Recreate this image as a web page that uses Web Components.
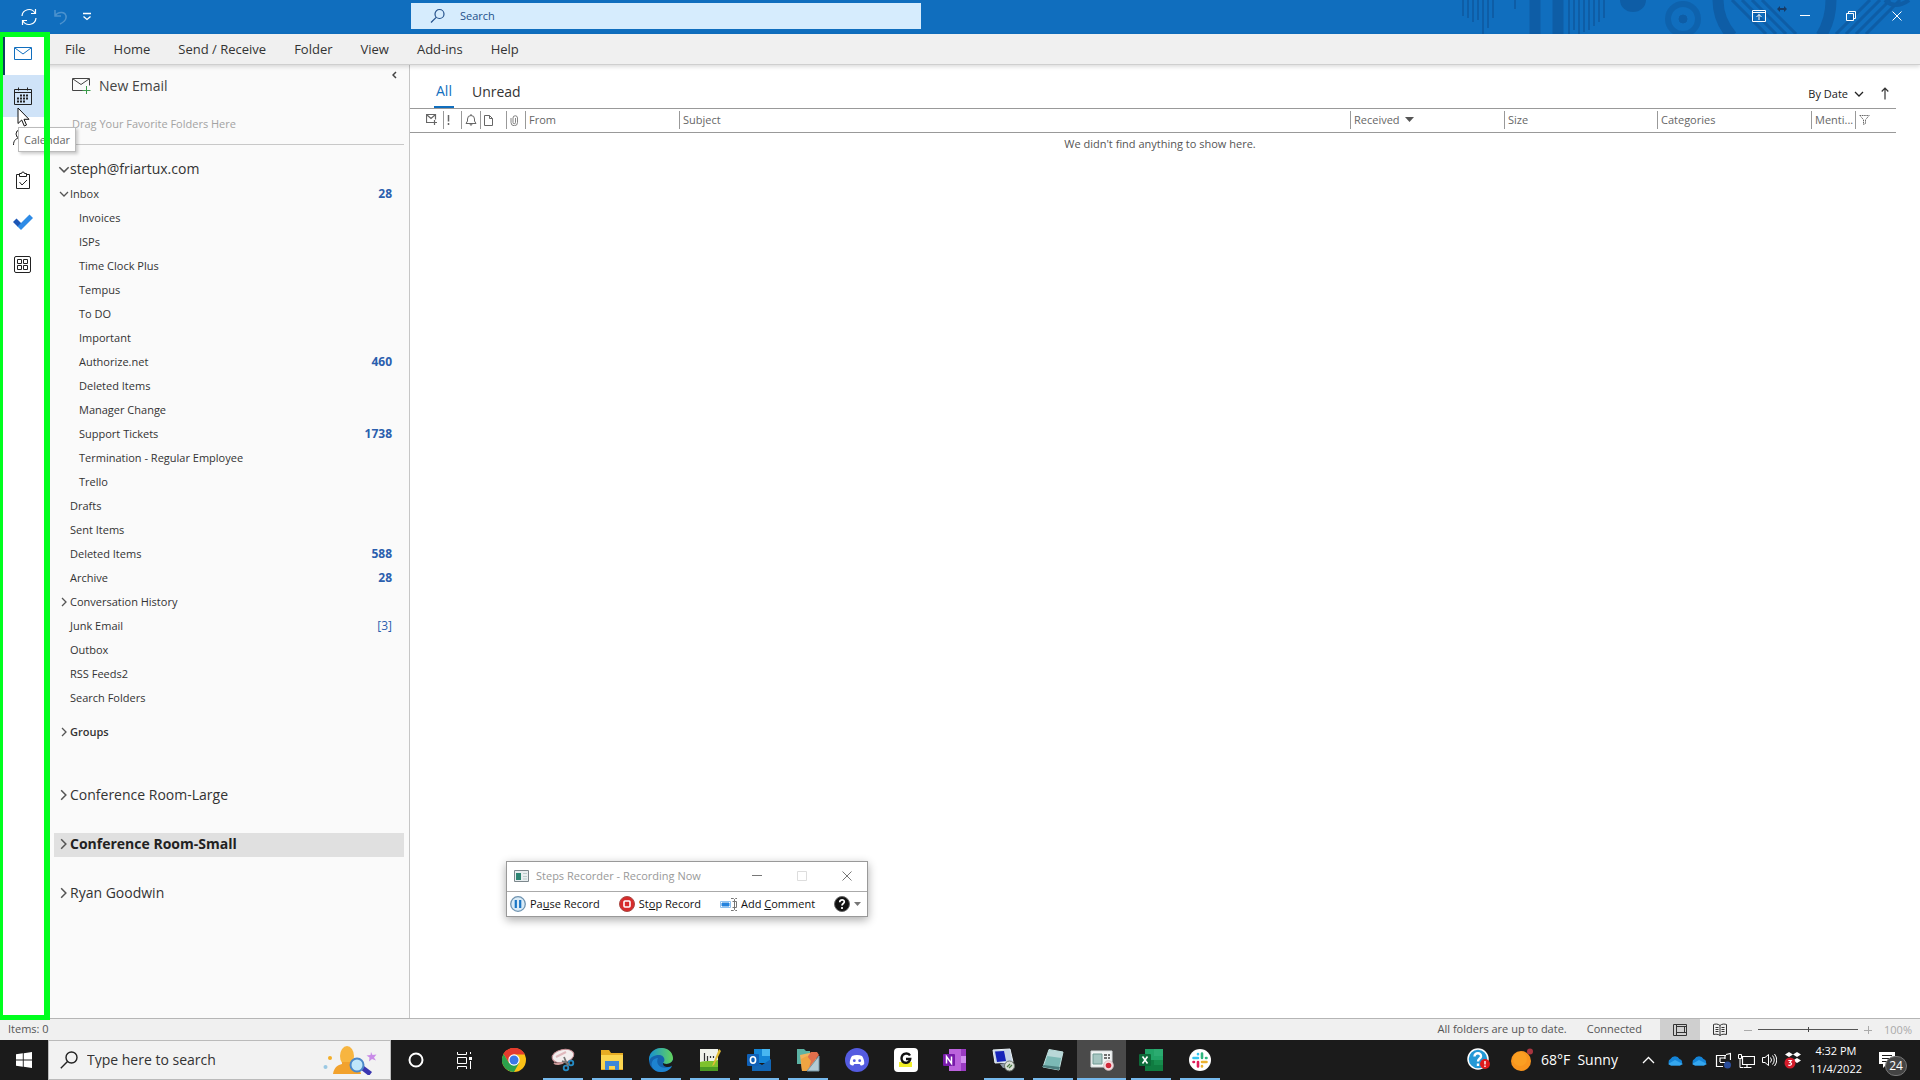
<!DOCTYPE html>
<html lang="en">
<head>
<meta charset="utf-8">
<title>Outlook</title>
<style>
html,body{height:100%;margin:0}
body{font:11px/16px "Open Sans","Noto Sans",sans-serif;color:#333;background:#fff;overflow:hidden}
</style>
</head>
<body>
<outlook-desktop></outlook-desktop>
<script>
const base = `*{box-sizing:border-box}button,input{font:inherit;color:inherit;background:none;border:0;padding:0;margin:0;outline:0}button{cursor:default;display:flex;align-items:center}svg{display:block;flex:none}`;
function define(name, css, html) {
  const t = document.createElement('template');
  customElements.define(name, class extends HTMLElement {
    constructor() {
      super();
      t.innerHTML = `<style>${base}${css}</style>${typeof html === 'function' ? html(this) : html}`;
      this.attachShadow({mode: 'open'}).append(t.content.cloneNode(true));
    }
  });
}
const svg = (w, h, body, extra = '') => `<svg width="${w}" height="${h}" viewBox="0 0 ${w} ${h}" fill="none" stroke="currentColor" aria-hidden="true" ${extra}>${body}</svg>`;
const I = {
  sync: svg(18,18,'<path d="M2 8a7 7 0 0 1 13-3M16 10a7 7 0 0 1-13 3M15.500 1v4.500H11M2.500 17v-4.500H7" stroke-width="1.200"/>'),
  undo: svg(18,18,'<path d="M3 2v6h6M3 8c3-5 12-5 11 2-.500 3-4 5-6 6" stroke-width="1.500"/>'),
  qat: svg(10,10,'<path d="M1 1.500h8M1.500 4.500 5 7.500l3.500-3" stroke-width="1.300"/>'),
  find: svg(16,16,'<circle cx="9.500" cy="6" r="4.500" stroke-width="1.200"/><path d="M6.200 9.300 1 14.500" stroke-width="1.200"/>'),
  ribbonopt: svg(14,12,'<path d="M.5.500h13v11H.5zM.5 2.500h13M7 10V4.500M4.500 7 7 4.500 9.500 7"/>'),
  drag: svg(10,6,'<path d="M0 3l3-3v2h4V0l3 3-3 3V4H3v2z" fill="#173b66" stroke="none"/>'),
  min: svg(10,10,'<path d="M0 4.500h10"/>'),
  restore: svg(10,10,'<path d="M.5 2.500h7v7h-7zM2.500 2V.500h7v7H8"/>'),
  close: svg(10,10,'<path d="M.5.500l9 9M9.500.500l-9 9"/>'),
  max: svg(10,10,'<path d="M.5.500h9v9h-9z"/>'),
  mail: svg(18,14,'<path d="M.5.500h17v12H.5zM1 1l8 6 8-6"/>'),
  cal: svg(18,18,'<path d="M.5 2.500h17v15H.5zM.5 5.500h17M4.500.500v3M13.500.500v3"/><path d="M6 8.500h9M3 11.500h12M3 14.500h8" stroke-width="2" stroke-dasharray="2 1"/>'),
  people: svg(20,18,'<circle cx="7" cy="5" r="4"/><path d="M.5 16c0-5 3-7 6.500-7s6.500 2 6.500 7M13 2a3.500 3.500 0 0 1 0 7c3 0 5 2 5 6"/>'),
  tasks: svg(14,18,'<path d="M3.500 3.500h-3v14h13v-14h-3M3.500 5.500v-3h2a1.500 1.500 0 0 1 3 0h2v3zM3.500 11l2.500 3 5-5"/>'),
  todo: svg(20,16,'<path d="M0 8l3.500-3.500L8.500 9.500 5 13z" fill="#1d56b5" stroke="none"/><path d="M4.500 12.500 16.500.500 20 4 8 16z" fill="#2e8be6" stroke="none"/>'),
  apps: svg(17,17,'<rect x=".5" y=".5" width="16" height="16" rx="1.500"/><path d="M3.500 3.500h4v4h-4zM9.500 3.500h4v4h-4zM3.500 9.500h4v4h-4zM9.500 9.500h4v4h-4z"/>'),
  newmail: svg(19,17,'<path d="M11 12.500H.5V.500h17v7M1 1l8 5.500L17 1"/><path d="M14.500 8v8M10.500 12.500h8" stroke="#3b9a4a"/>'),
  left: svg(5,8,'<path d="M4 1 1 4l3 3" stroke-width="1.500"/>'),
  right: svg(6,10,'<path d="M1 1l4 4-4 4" stroke-width="1.300"/>'),
  down: svg(10,6,'<path d="M1 1l4 4 4-4" stroke-width="1.300"/>'),
  up: svg(8,13,'<path d="M4 12.500V1M.7 4.500 4 1l3.300 3.500" stroke-width="1.200"/>'),
  mailplus: svg(12,12,'<path d="M7 8.500H.5v-8h9v5M1 1l4 3.500L9 1M8.500 6v5M6 8.500h5" stroke-width="1.200"/>'),
  bang: svg(3,10,'<path d="M1.500 0v6.500M1.500 8v2" stroke-width="1.500"/>'),
  bell: svg(12,12,'<path d="M1 9.500h10L9.500 7V5a3.500 3.500 0 0 0-7 0v2zM4.500 9.500l1.500 2 1.500-2M6 0v1.500"/>'),
  page: svg(9,11,'<path d="M.5.500h5l3 3v7h-8zM5.500.500v3h3"/>'),
  clip: svg(8,11,'<path d="M5.500 3v4.500a1.200 1.200 0 0 1-2.500 0V3a2.200 2.200 0 0 1 4.500 0v4.500a3.200 3.200 0 0 1-6.500 0V3" stroke-width=".8"/>'),
  filter: svg(11,10,'<path d="M.8.500h9.400L6.500 4.700V8.500l-2 1V4.700z" stroke-dasharray="1.500 .7"/>'),
  tri: svg(9,6,'<path d="M0 0h9L4.500 5z" fill="#555" stroke="none"/>'),
  normal: svg(14,12,'<path d="M.5.500h13v11H.5zM3.500.500v11M3.500 8.500h10M3.500 2.500h10M11.500 2.500v6"/>'),
  read: svg(14,13,'<path d="M7 2.500v10M7 2.500C5 .5 2 1 .5 1.500v10c2-.5 5-.5 6.500 1 1.500-1.500 4.500-1.500 6.500-1v-10C12 1 9 .5 7 2.500M2.500 4.500h3M2.500 6.500h3M2.500 8.500h3M8.500 4.500h3M8.500 6.500h3M8.500 8.500h3"/>'),
  cursor: svg(13,20,'<path d="M1 1v15.500l3.700-3.500 2.600 6 2.200-1-2.500-5.700h5z" fill="#fff" stroke="#111"/>'),
  minus: svg(8,8,'<path d="M0 4.500h8"/>'), plus: svg(8,8,'<path d="M0 4.500h8M4.500 0v8"/>'),
  recapp: svg(15,12,'<path d="M.5.500h14v11H.5z" fill="#e8eef0" stroke="#7c878c"/><path d="M2 3h5v7H2z" fill="#2d8573" stroke="none"/><path d="M9 3.500h4M9 6.500h4M9 9h4" stroke="#bcc"/>'),
  pause: svg(16,16,'<circle cx="8" cy="8" r="7.300" fill="#d9ebf7" stroke="#6f93b0" stroke-width="1.300"/><path d="M5.800 4v8M10.200 4v8" stroke="#1976c5" stroke-width="2.200"/>'),
  stop: svg(16,16,'<circle cx="8" cy="8" r="7.500" fill="#d72b2b" stroke="#a84a45"/><rect x="5" y="5" width="6" height="6" rx="1" fill="none" stroke="#fff" stroke-width="1.600"/>'),
  comment: svg(17,13,'<path d="M.5 3.500h10v6H.5z" fill="#fff" stroke="#8ec1ef"/><path d="M2 5h7v3H2z" fill="#2583dd" stroke="#2583dd"/><path d="M11 .5h2.500l1 1 1-1H17M11 12.500h2.500l1-1 1 1H17M14.500 1.500v10M12.500 3.500h4v6h-4" stroke="#777"/>'),
  helpb: svg(16,16,'<circle cx="8" cy="8" r="7.500" fill="#111" stroke="#666"/><path d="M5.700 6.200C5.700 3 10.500 3.200 10.300 6c0 1.500-2.300 1.600-2.300 3.400M8 11v2" stroke="#fff" stroke-width="1.700"/>'),
  caret: svg(7,4,'<path d="M0 0h7L3.500 4z" fill="#777" stroke="none"/>'),
  win: svg(16,16,'<path d="M0 2.300 6.800 1.300v6.300H0zM7.700 1.200 16 0v7.600H7.700zM0 8.400h6.800v6.300L0 13.700zM7.700 8.400H16V16l-8.300-1.200z" fill="#fff" stroke="none"/>'),
  tfind: svg(18,18,'<circle cx="11.500" cy="6.500" r="5.500" stroke-width="1.400"/><path d="M7.500 10.500.8 17.200" stroke-width="1.400"/>'),
  bing: svg(56,30,'<g stroke="none"><path d="M10 29c1-7 5-9 9-10h10c5 1 8 5 9 10z" fill="#f2a22d"/><ellipse cx="24" cy="11" rx="7" ry="10" fill="#f7b540"/><path d="M19 17h10v5H19z" fill="#f2a22d"/><circle cx="7" cy="13" r="2" fill="#f4ae28"/><circle cx="2.500" cy="22" r="2" fill="#9ac8e3"/><path d="M48 7l1.500 3 4-.5-2.500 3 2 3-4-1.500-3 2.500.5-4-3-2 4-.5z" fill="#c98be8"/><path d="M37 24l4-3 8 6-3 4z" fill="#3a35b0"/></g><circle cx="34" cy="20" r="6.500" fill="#bfe6fa" stroke="#4b87c9" stroke-width="2"/>'),
  cortana: svg(18,18,'<circle cx="9" cy="9" r="6.500" stroke="#fff" stroke-width="2"/>'),
  tview: svg(18,17,'<path d="M1.500 0v2.500h9V0M1.500 17v-2.500h9V17M1.500 5.500h9v6h-9zM14.500 0v2M14.500 9v8" stroke="#fff"/><path d="M13 5h3v3h-3z" fill="#fff" stroke="none"/>'),
  chrome: svg(24,24,'<g stroke="none"><circle cx="12" cy="12" r="12" fill="#fbc116"/><path d="M1.600 6A12 12 0 0 1 22.400 6H12L7 15z" fill="#e33b2e"/><path d="M1.600 6 7 15l10 0-5 9A12 12 0 0 1 1.600 6z" fill="#2ba24c"/><path d="M1.600 6A12 12 0 0 1 22.700 6.500H12a6 6 0 0 0-5.500 4z" fill="#e33b2e"/><circle cx="12" cy="12" r="5.700" fill="#fff"/><circle cx="12" cy="12" r="4.500" fill="#3b78e7"/></g>'),
  snip: svg(24,24,'<ellipse cx="12" cy="8" rx="11" ry="6.500" transform="rotate(-12 12 8)" fill="#f3eeee" stroke="#c78f95"/><path d="M3 15c3 2 8 1 11-2" stroke="#c99" stroke-width="2"/><path d="M5 9 15 4" stroke="#e0b8bc" stroke-width="2"/><circle cx="15" cy="20" r="2.300" stroke="#268bc4" stroke-width="1.800"/><circle cx="20" cy="15" r="2.300" stroke="#268bc4" stroke-width="1.800"/><path d="M17 18l-4-9M18 16l-7-3" stroke="#777" stroke-width="1.800"/>'),
  folder: svg(24,22,'<g stroke="none"><path d="M1 1h8l2 3h12v17H1z" fill="#e6ac24"/><path d="M1 6h22v14H1z" fill="#fbd550"/><path d="M5 12h14v9h-4v-4H9v4H5z" fill="#3f87d6"/></g>'),
  edge: svg(24,24,'<defs><linearGradient id="e"><stop stop-color="#1690d2"/><stop offset="1" stop-color="#63d45c"/></linearGradient></defs><g stroke="none"><circle cx="12" cy="12" r="12" fill="#1463ae"/><path d="M0 11C1-3 23-4 24 10c0 6-7 7-10 5 3-3 1-8-4-8C5 7 1 9 0 14z" fill="url(#e)"/><path d="M9 10c-3 6 3 12 11 9l3-1c-2 5-8 6-11 6C6 24 1 19 3 14c1-3 4-4 6-4z" fill="#1d83d1"/><path d="M14 15c3 2 8 1 10-3v4l-1.500 2c-3 2-9 1-8.500-3z" fill="#1b1b1b"/></g>'),
  npp: svg(22,24,'<g stroke="none"><path d="M1 1h18v22H1z" fill="#f0f2ea"/><path d="M1 14c6-2 12 0 18-2v11H1z" fill="#7ec22d"/><path d="M1 19h18v4H1z" fill="#4b9a24"/><path d="M20 1l2 2-7 14-2 1z" fill="#e1bc35"/></g><path d="M5.500 13V5M8.500 13V8M11.500 8v2M14.500 8v2" stroke="#333" stroke-width="1.200"/>'),
  outlook: svg(24,22,'<g stroke="none"><path d="M7 0h16v14H7z" fill="#1485d6"/><path d="M15 0h8v7h-8z" fill="#48b7f1"/><path d="M5 10l10 6 9-6v12H5z" fill="#1266b5"/><rect y="5" width="12" height="12" rx="1" fill="#0f60b7"/></g><ellipse cx="6" cy="11" rx="2.600" ry="3.200" stroke="#fff" stroke-width="1.600"/>'),
  files: svg(24,24,'<g stroke="none"><path d="M1 1h7l2 2h4v13H1z" fill="#5bb2a4"/><path d="M4 7l14-3 3 8-6 11H6z" fill="#f0b35d"/><path d="M15 4h6l2 3-11 14-4-7z" fill="#e06f4c"/><path d="M5 11l6-3 4 5-3 10H6z" fill="#efa542"/><path d="M11 23 23 8v15z" fill="#b4cbd5" stroke="#7495a6"/></g>'),
  discord: svg(24,24,'<circle cx="12" cy="12" r="12" fill="#545be0" stroke="none"/><path d="M7 8c3-1.500 7-1.500 10 0 1.500 2 2.500 5 2.200 8-1 1-2.500 1.500-3.500 1.600l-1-1.600H9.300l-1 1.600c-1-.1-2.500-.6-3.500-1.600C4.500 13 5.500 10 7 8z" fill="#fff" stroke="none"/><circle cx="9.300" cy="12.700" r="1.400" fill="#545be0" stroke="none"/><circle cx="14.700" cy="12.700" r="1.400" fill="#545be0" stroke="none"/>'),
  gapp: svg(24,24,'<rect width="24" height="24" rx="4" fill="#fff" stroke="none"/><path d="M5 14h13v5H5z" fill="#f0ee2a" stroke="none"/><path d="M16 7.500C14.500 4.500 8 4.500 7.500 10c0 6 8 6.500 8.700 1H12" stroke="#111" stroke-width="2.400"/>'),
  onenote: svg(24,22,'<g stroke="none"><path d="M6 0h17v22H6z" fill="#bb63dc"/><path d="M18 0h5v22h-5z" fill="#9a3bc2"/><path d="M18 7h5v7h-5z" fill="#d28ef0"/><rect y="5" width="12" height="12" rx="1" fill="#7719aa"/></g><path d="M3.500 14.500V7.500l5 7V7.500" stroke="#fff" stroke-width="1.500"/>'),
  rdp: svg(24,24,'<path d="M1 2l17-1 3 13-18 1z" fill="#c6d4e5" stroke="#eaf1f7"/><path d="M3 3.500 12 3l2 10-9 1z" fill="#1623b9" stroke="none"/><path d="M8 16l10-2 2 5-9 1z" fill="#8d9aa7" stroke="none"/><circle cx="17.500" cy="18" r="5" fill="#d9dfd7" stroke="#6e7870"/><path d="M15 19l3-3M17 20l3-3" stroke="#4b7b45" stroke-width="1.200"/>'),
  note: svg(24,24,'<path d="M8 1.500l14 2.500-4 18L2 19z" fill="#7bb9b5" stroke="#c2e0df"/><path d="M8 2 22 4l-1.500 6L6 8z" fill="#b9d8d8" stroke="none"/><path d="M1 19l17 3 1-3L2.500 17z" fill="#4a7d7d" stroke="none"/>'),
  psr: svg(24,24,'<path d="M1 3h21v16H1z" fill="#f1f4f4" stroke="#d5dadb"/><path d="M3 6h9v10H3z" fill="#a6c6c2" stroke="#709a94"/><path d="M14 7h6M14 10h6" stroke="#444" stroke-width="1.500" stroke-dasharray="3 1"/><circle cx="18.500" cy="17.500" r="4.800" fill="#f8dfe2" stroke="#d5c1c4"/><circle cx="18.500" cy="17.500" r="2.800" fill="#d0283a" stroke="none"/>'),
  excel: svg(24,22,'<g stroke="none"><path d="M6 0h18v22H6z" fill="#21a366"/><path d="M15 0h9v7h-9z" fill="#2bab70"/><path d="M6 11h18v11H6z" fill="#107c41"/><path d="M15 11h9v5h-9z" fill="#178c4d"/><rect y="5" width="12" height="12" rx="1" fill="#0d6b39"/></g><path d="M3.500 7.500l5 7M8.500 7.500l-5 7" stroke="#fff" stroke-width="1.600"/>'),
  slack: svg(24,24,'<circle cx="12" cy="12" r="11" fill="#fff" stroke="none"/><g stroke-width="2.600" stroke-linecap="round"><path d="M10 6v.2M5.500 10H10" stroke="#36c5f0"/><path d="M14 5.500V10M18 10h.5" stroke="#2eb67d"/><path d="M14 14h4.500M14 18v.5" stroke="#ecb22e"/><path d="M10 14v4.500M5.500 14h.5" stroke="#e01e5a"/></g>'),
  help: svg(24,24,'<circle cx="11" cy="11" r="10" fill="#2499d6" stroke="#fff" stroke-width="1.500"/><path d="M7.500 8.500C7.500 4 14.500 4.500 14 8.500 13.500 11 11 10.500 11 13.500M11 15.500v2.500" stroke="#fff" stroke-width="2.400"/><circle cx="18" cy="16" r="5" fill="#e01a1a" stroke="none"/><path d="M18 13v3.500M18 17.500v1.500" stroke="#fff" stroke-width="1.400"/>'),
  sun: svg(24,24,'<circle cx="11" cy="13" r="10" fill="#f9951e" stroke="none"/><circle cx="10" cy="11" r="7" fill="#fb9f22" stroke="none"/><circle cx="20" cy="3.500" r="3" fill="#a8353f" stroke="none"/>'),
  tchev: svg(13,8,'<path d="M1 7l5.500-5.500L12 7" stroke-width="1.300"/>','class="chev"'),
  cloud: svg(17,11,'<path d="M4 10.500a3.500 3.500 0 0 1-.5-6.500A5 5 0 0 1 12.500 4a3.400 3.400 0 0 1 .5 6.500z" fill="#1484d7" stroke="none"/><path d="M1 9l7-4 8 4-3 1.500H4z" fill="#35a7ef" stroke="none"/>'),
  update: svg(16,17,'<path d="M11 3.500H1.500v11H8M15.500 8V1.500L11 2.500" stroke-width="1.200"/><path d="M5 10V6h5M10 4v3M5 10.500h5" stroke-width="1.200"/><circle cx="12.500" cy="13" r="3.500" fill="#2a4d9b" stroke="none"/>'),
  net: svg(17,15,'<path d="M4.500 3.500h12v8h-12zM9 12v2.500M5.500 14.500h8" stroke-width="1.200"/><path d="M.5 1.500h3v4h-3zM2 6v8.500h3" fill="#1b1b1b"/>'),
  vol: svg(15,14,'<path d="M.5 4.500H3L6.500 1.500v11L3 9.500H.5zM8.500 4.500q2 2.500 0 5M10.500 2.500q3.500 4.500 0 9M12.500 1q4.500 6 0 12"/>'),
  dropbox: svg(18,18,'<path d="M5 1l4 2.500L5 6 1 3.500zM13 1l4 2.500L13 6 9 3.500zM13 7l4 2.500-4 2.500-4-2.500z" fill="#fff" stroke="none"/><circle cx="6" cy="12" r="5.500" fill="#d51c2b" stroke="none"/><path d="M4.300 9.500h3L5.800 11.500C8.500 11.500 8 15 4.300 14.200" stroke="#fff" stroke-width="1.200"/>'),
  action: svg(18,16,'<path d="M1 0h16v12H9l-4 4v-4H1z" fill="#fff" stroke="none"/><path d="M4 3.500h10M4 6.500h10M4 9.500h6" stroke="#1b1b1b"/>'),
  art: `<svg width="540" height="34" viewBox="0 0 540 34" fill="none" stroke="#0e5ba2" aria-hidden="true"><g opacity=".85"><path d="M83 0v16M88 0v18M93 0v22M98 0v20M103 0v34M108 0v28M113 0v18M135 0v9M189 0v34M194 0v30M199 0v34M204 0v32M209 0v30M214 0v26M219 0v22M224 0v18" stroke-width="2"/><path d="M155 0v34M178 0v34" stroke-width="11"/><path d="M240 0a13 12 0 0 0 26 0z" fill="#0e5ba2" stroke="none"/><circle cx="303" cy="19" r="15" stroke-width="6" opacity=".7"/><circle cx="303" cy="19" r="4" fill="#0e5ba2"/><path d="M338 0q0 20 14 36M451 0q0 20-10 36" stroke-width="11"/><path d="M352 0l34 34M362 0l34 34M372 0l34 34M382 0l34 34M456 34l34-34M466 34l34-34M476 34l34-34M486 34l34-34" stroke-width="3"/><path d="M505 0q10 10 24 0" stroke-width="4"/></g></svg>`
};

define('title-bar', `:host{display:flex;align-items:center;height:34px;background:#106ebe;color:#fff;position:relative}
.art{position:absolute;right:0;top:0;height:34px;overflow:hidden}
.left{display:flex;align-items:center;gap:14px;width:411px;padding-left:20px}.left button:last-child{margin-left:-2px}.dim{opacity:.25}
label{display:flex;align-items:center;gap:14px;width:510px;height:26px;margin-bottom:2px;padding-left:19px;background:#d6ecfd;color:#23508a}
input{flex:1}input::placeholder{color:#23508a;opacity:1}
.right{display:flex;align-items:center;margin-left:auto;position:relative;padding-bottom:2px}.right button{width:46px;height:30px;justify-content:center}.drag{align-self:flex-start;margin:5px -5px 0 -5px}`,
`<div class="art">${I.art}</div><div class="left"><button aria-label="Send/Receive">${I.sync}</button><button class="dim" aria-label="Undo">${I.undo}</button><button aria-label="Customize">${I.qat}</button></div>
<label>${I.find}<input aria-label="Search" placeholder="Search"></label>
<div class="right"><button aria-label="Ribbon options">${I.ribbonopt}</button><span class="drag">${I.drag}</span><button aria-label="Minimize">${I.min}</button><button aria-label="Restore">${I.restore}</button><button aria-label="Close">${I.close}</button></div>`);

define('ribbon-tabs', `:host{display:block;height:31px;background:#f0f0f0;border-bottom:1px solid #cfcfcf;box-shadow:0 2px 4px #0002;position:relative;z-index:1}
nav{display:flex;align-items:center;gap:28px;height:30px;padding-left:65px;font-size:13px}`,
`<nav>${['File','Home','Send / Receive','Folder','View','Add-ins','Help'].map(t => `<button>${t}</button>`).join('')}</nav>`);

define('nav-rail', `:host{display:flex;flex-direction:column;width:50px;background:#fff;position:relative;z-index:3;color:#222}
button{height:42px;width:45px;justify-content:center}
.mail{color:#106ebe;border-left:5px solid #0c3f5e;padding-right:4px}.hot{background:#cfe3f8}
.tip{position:absolute;left:18px;top:94px;height:25px;padding:4px 5px;background:#fff;border:1px solid #bbb;box-shadow:2px 2px 3px #0003;color:#666}
.cur{position:absolute;left:17px;top:74px}
.mark{position:absolute;left:0;top:-1px;right:0;bottom:-2px;border:5px solid #00ff1e;border-left-width:3px;border-right-width:6px}`,
`<button class="mail" aria-label="Mail">${I.mail}</button><button class="hot" aria-label="Calendar">${I.cal}</button><button aria-label="People">${I.people}</button><button aria-label="Tasks">${I.tasks}</button><button aria-label="To Do">${I.todo}</button><button aria-label="More apps">${I.apps}</button>
<div class="tip">Calendar</div><div class="mark"></div><div class="cur">${I.cursor}</div>`);

define('folder-row', `:host{display:block}
button{width:100%;height:24px;padding:0 12px 0 3px;text-align:left;color:#333}
.tw{width:13px;display:flex;justify-content:center;color:#555}
.name{flex:1}.n{color:#2b5fae;font-weight:700;font-size:12px}
:host([sub]) .tw{width:22px}:host([account]) button{font-size:14px;padding-bottom:2px}:host([account]) .tw{width:13px}
:host([account][open]) svg{width:12px;height:7px}:host([account][closed]) svg{width:7px;height:12px}
:host([bold]) button{font-weight:700}:host([semi]) button{font-weight:600}:host([selected]) button{background:#e0e0e0;color:#222}
:host([plain]) .n{font-weight:400}`,
el => `<button><span class="tw">${el.hasAttribute('open') ? I.down : el.hasAttribute('closed') ? I.right : ''}</span><span class="name"><slot></slot></span><span class="n">${el.getAttribute('count') || ''}</span></button>`);

const row = (t, a = '') => `<folder-row ${a}>${t}</folder-row>`;
define('folder-pane', `:host{display:block;width:360px;padding:8px 5px 0 4px;background:#fafafa;border-right:1px solid #c6c6c6;position:relative}
.toggle{position:absolute;right:12px;top:6px;color:#444}
.new{height:26px;gap:8px;padding-left:18px;font-size:14px;color:#444}
.fav{padding:17px 0 12px 18px;color:#a3a3a3;border-bottom:1px solid #c8c8c8;margin-bottom:13px}
.g{margin-top:10px}.a{margin-top:40px}.b{margin-top:25px}`,
`<button class="toggle" aria-label="Collapse">${I.left}</button><button class="new">${I.newmail}New Email</button><div class="fav">Drag Your Favorite Folders Here</div>
${row('steph@friartux.com','account open')}${row('Inbox','open count="28"')}
${[['Invoices'],['ISPs'],['Time Clock Plus'],['Tempus'],['To DO'],['Important'],['Authorize.net',460],['Deleted Items'],['Manager Change'],['Support Tickets',1738],['Termination - Regular Employee'],['Trello']].map(([t,n]) => row(t, 'sub' + (n ? ` count="${n}"` : ''))).join('')}
${row('Drafts')}${row('Sent Items')}${row('Deleted Items','count="588"')}${row('Archive','count="28"')}${row('Conversation History','closed')}${row('Junk Email','plain count="[3]"')}${row('Outbox')}${row('RSS Feeds2')}${row('Search Folders')}
<div class="g">${row('Groups','closed semi')}</div><div class="a">${row('Conference Room-Large','closed account')}</div><div class="b">${row('Conference Room-Small','closed account bold selected')}</div><div class="b">${row('Ryan Goodwin','closed account')}</div>`);

define('message-list', `:host{display:block;flex:1;min-width:0;padding-right:24px}
.bar{display:flex;align-items:flex-end;height:44px;padding:0 5px 0 24px;border-bottom:1px solid #999}
.bar button{font-size:14px;height:32px;padding:0 2px}.bar .on{color:#106ebe;border-bottom:2px solid #106ebe;margin-right:16px}
.bar .by{margin-left:auto;font-size:11px;gap:6px;height:28px;color:#222}.bar .up{margin-left:13px;height:30px}
table{width:100%;border-collapse:collapse;table-layout:fixed}th{padding:0;height:23px;font-weight:400;text-align:left;border-bottom:1px solid #999;color:#666}
th div{display:flex;align-items:center;gap:5px;height:18px;padding-left:3px;border-left:1px solid #999;white-space:nowrap}th:first-child div{border:0;padding-left:16px}
td{text-align:center;padding:3px 0 0 14px;color:#555}`,
`<div class="bar"><button class="on">All</button><button>Unread</button><button class="by">By Date ${I.down}</button><button class="up" aria-label="Sort order">${I.up}</button></div>
<table><colgroup>${[33,18,19,26,19,154,0,154,153,154,44,41].map(w => `<col${w ? ` style="width:${w}px"` : ''}>`).join('')}</colgroup>
<thead><tr>${[I.mailplus,I.bang,I.bell,I.page,I.clip,'From','Subject','Received'+I.tri,'Size','Categories','Menti...',I.filter].map(c => `<th><div>${c}</div></th>`).join('')}</tr></thead>
<tbody><tr><td colspan="12">We didn't find anything to show here.</td></tr></tbody></table>`);

define('steps-recorder', `:host{position:absolute;left:506px;top:861px;width:362px;background:#fff;border:1px solid #999;box-shadow:0 3px 9px #0005;color:#111;z-index:4}
.t{display:flex;align-items:center;height:30px;padding:0 1px 2px 7px;gap:7px;color:#999;border-bottom:1px solid #aaa}.t span{flex:1}.t button{width:38px;height:28px;justify-content:center;color:#777}.t .off{color:#ddd}
.b{display:flex;align-items:center;justify-content:space-between;height:24px;padding:0 6px 0 3px}.b button{gap:4px}`,
`<div class="t">${I.recapp}<span>Steps Recorder - Recording Now</span><button aria-label="Minimize">${I.min}</button><button class="off" aria-label="Maximize">${I.max}</button><button aria-label="Close">${I.close}</button></div>
<div class="b"><button>${I.pause}<span>Pa<u>u</u>se Record</span></button><button>${I.stop}<span>St<u>o</u>p Record</span></button><button>${I.comment}<span>Add <u>C</u>omment</span></button><button aria-label="Help">${I.helpb}${I.caret}</button></div>`);

define('status-bar', `:host{display:flex;align-items:center;height:22px;padding:0 8px;background:#f0f0f0;border-top:1px solid #b5b5b5;color:#555}
:host>span{padding-bottom:1px}.s{margin-left:auto;margin-right:20px}.v{width:40px;height:21px;justify-content:center;color:#333}.c{margin-right:18px}.on{background:#cfcfcf}.z{display:flex;align-items:center;gap:6px;margin-left:4px;color:#aaa}
input{appearance:none;width:100px;height:9px;background:linear-gradient(#555,#555) 50% 50%/100% 1px no-repeat}input::-webkit-slider-thumb{appearance:none;width:1px;height:5px;background:#444}.z span{margin-left:6px}`,
`<span>Items: 0</span><span class="s">All folders are up to date.</span><span class="c">Connected</span><button class="v on" aria-label="Normal">${I.normal}</button><button class="v" aria-label="Reading">${I.read}</button><div class="z">${I.minus}<input type="range" aria-label="Zoom">${I.plus}<span>100%</span></div>`);

define('task-icon', `:host{display:block;width:49px;height:40px}button{width:100%;height:40px;justify-content:center;position:relative}
:host([run]) button::after{content:"";position:absolute;left:5px;right:4px;bottom:0;height:2px;background:#76b9ed}:host([active]) button{background:#4a4a4a}:host([active]) button::after{left:0;right:0}`,
el => `<button aria-label="${el.getAttribute('icon')}">${I[el.getAttribute('icon')]}</button>`);

define('task-bar', `:host{display:flex;height:40px;background:#1b1b1b;color:#fff;align-items:center}
.start{width:48px;height:40px;justify-content:center}
label{display:flex;align-items:center;gap:9px;width:343px;height:40px;padding:0 11px;background:#f2f2f2;border:1px solid #bbb;color:#222}input{flex:1;min-width:0;font-size:14px}input::placeholder{color:#333;opacity:1}
.apps{display:flex}.tray{margin-left:auto;display:flex;align-items:center;gap:7px;padding-right:8px}.w{gap:7px;font-size:14px;margin:0 17px 0 12px}.chev{margin-right:5px}.clock{text-align:center;line-height:18px;margin:0 5px 0 1px}.act{position:relative;width:38px;height:40px;padding-left:4px}
.act span{position:absolute;left:11px;top:16px;width:22px;height:20px;border-radius:10px;background:#444;border:1px solid #777;font-size:12px;line-height:18px;text-align:center}`,
`<button class="start" aria-label="Start">${I.win}</button><label>${I.tfind}<input aria-label="Type here to search" placeholder="Type here to search">${I.bing}</label>
<div class="apps">${['cortana','tview','chrome'].map(i => `<task-icon icon="${i}"></task-icon>`).join('')}${['snip run','folder run','edge run','npp run','outlook run','files run','discord','gapp','onenote','rdp run','note run','psr run active','excel run','slack run'].map(s => { const [i, ...a] = s.split(' '); return `<task-icon icon="${i}" ${a.join(' ')}></task-icon>`; }).join('')}</div>
<div class="tray">${I.help}<button class="w">${I.sun}<span>68°F&nbsp; Sunny</span></button>${I.tchev}${I.cloud}${I.cloud}${I.update}${I.net}${I.vol}${I.dropbox}<div class="clock">4:32 PM<br>11/4/2022</div><button class="act" aria-label="Notifications">${I.action}<span>24</span></button></div>`);

define('outlook-desktop', `:host{display:flex;flex-direction:column;height:100vh}main{display:flex;flex:1;min-height:0}main>nav-rail{margin-top:-32px}`,
`<title-bar></title-bar><ribbon-tabs></ribbon-tabs><main><nav-rail></nav-rail><folder-pane></folder-pane><message-list></message-list></main><status-bar></status-bar><task-bar></task-bar><steps-recorder></steps-recorder>`);
</script>
</body>
</html>
